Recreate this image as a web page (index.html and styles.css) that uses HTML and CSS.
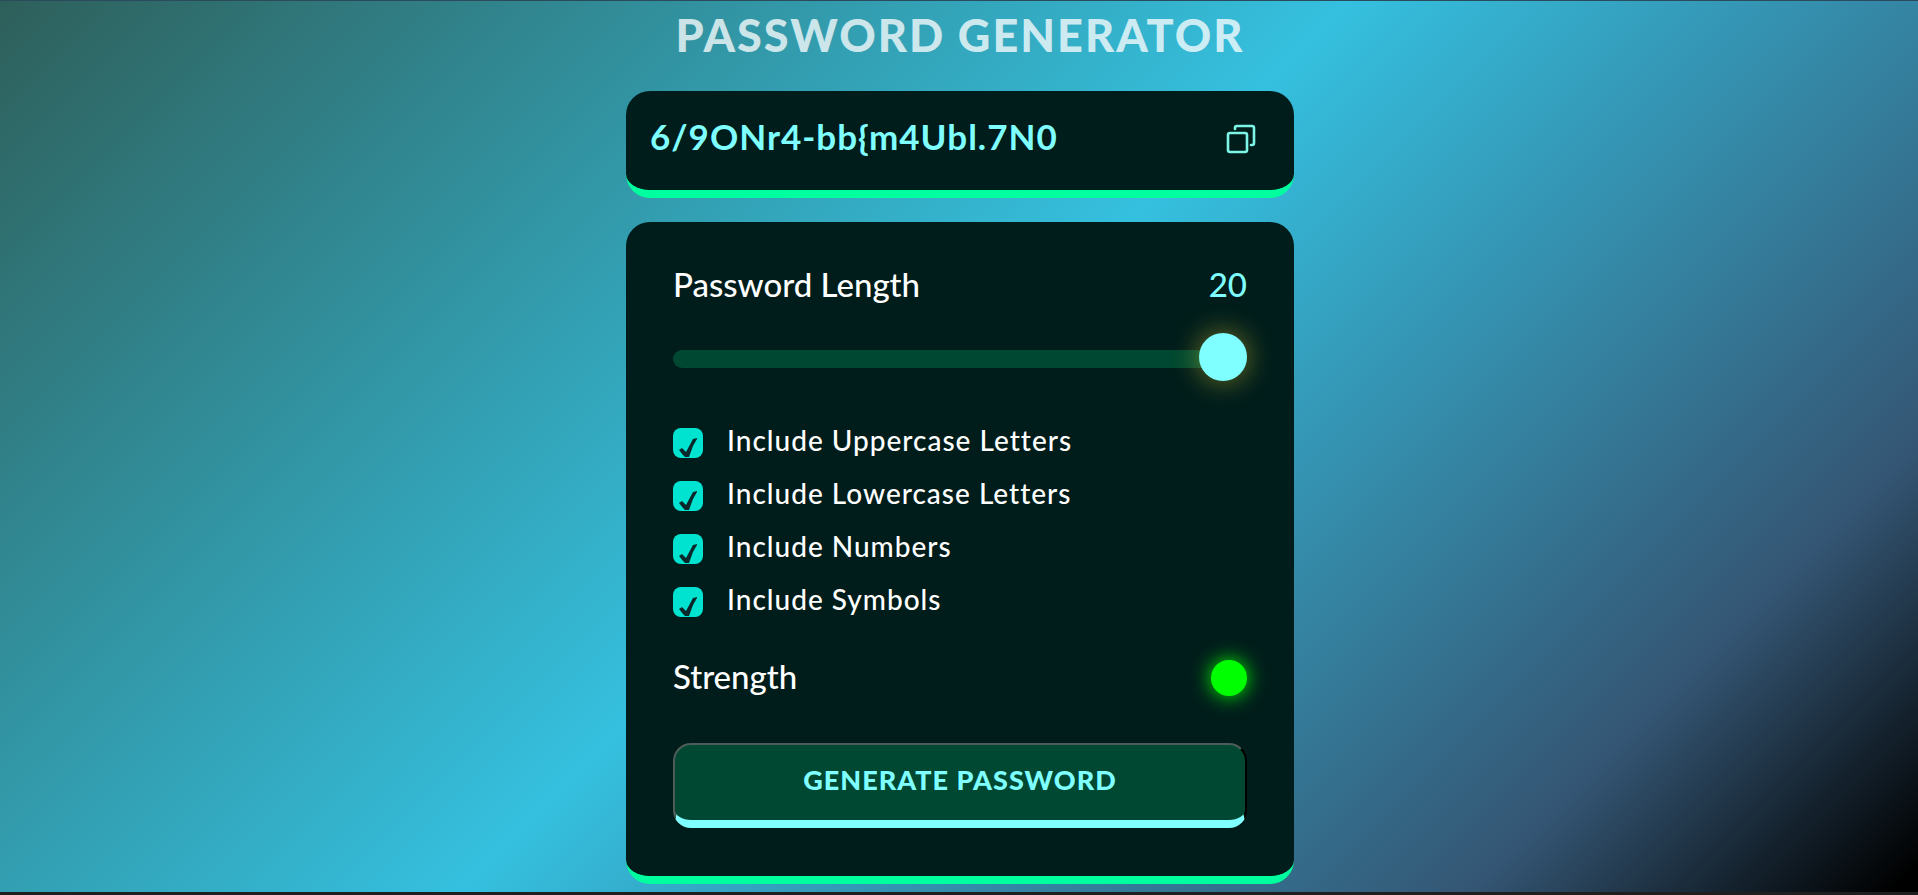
FILE: index.html
```html
<!DOCTYPE html>
<html lang="en">
<head>
<meta charset="utf-8">
<meta name="viewport" content="width=device-width, initial-scale=1">
<title>Password Generator</title>
<link rel="stylesheet" href="styles.css">
</head>
<body>
<main class="container">
  <h1 class="title">Password Generator</h1>

  <div class="display">
    <input class="display-value" type="text" readonly aria-label="Generated password" value="6/9ONr4-bb{m4Ubl.7N0">
    <button class="copy" type="button" aria-label="Copy password">
      <svg viewBox="0 0 30 30" fill="none" stroke="currentColor" stroke-width="2.6" stroke-linecap="round" stroke-linejoin="round" aria-hidden="true">
        <rect x="2" y="9" width="19" height="19" rx="2"/>
        <path d="M9 5V4a2 2 0 0 1 2-2h15a2 2 0 0 1 2 2v15a2 2 0 0 1-2 2h-1"/>
      </svg>
    </button>
  </div>

  <form class="panel">
    <div class="row">
      <label for="length">Password Length</label>
      <output class="length-value" for="length">20</output>
    </div>
    <input class="slider" id="length" type="range" min="1" max="20" value="20">

    <div class="options">
      <div class="option"><input class="check" id="uppercase" type="checkbox" checked><label class="option-label" for="uppercase">Include Uppercase Letters</label></div>
      <div class="option"><input class="check" id="lowercase" type="checkbox" checked><label class="option-label" for="lowercase">Include Lowercase Letters</label></div>
      <div class="option"><input class="check" id="numbers" type="checkbox" checked><label class="option-label" for="numbers">Include Numbers</label></div>
      <div class="option"><input class="check" id="symbols" type="checkbox" checked><label class="option-label" for="symbols">Include Symbols</label></div>
    </div>

    <div class="row strength">
      <span class="strength-label">Strength</span>
      <span class="indicator"></span>
    </div>

    <button class="generate" type="button">Generate Password</button>
  </form>
</main>
</body>
</html>
```

FILE: styles.css
```css
* {
  box-sizing: border-box;
  margin: 0;
  padding: 0;
}

body {
  min-height: 100vh;
  padding-left: 2px;
  font-family: Lato, "Open Sans", sans-serif;
  color: #fff;
  background: linear-gradient(135deg, #2e5f5a 0%, #35c0df 48%, #345674 84%, #000 99%);
  border-top: 1px solid #2b4a5c;
  border-bottom: 3px solid #1f1f1f;
}

.container {
  width: 90%;
  max-width: 668px;
  margin: 0 auto;
}

.title {
  padding-top: 6px;
  line-height: 56px;
  margin-bottom: 28px;
  font-size: 45px;
  font-weight: 900;
  letter-spacing: 2px;
  text-align: center;
  text-transform: uppercase;
  color: rgba(255, 255, 255, 0.75);
}

.display,
.panel {
  background: #001d1b;
  border-bottom: 8px solid #00ff9f;
  border-radius: 24px;
}

.display {
  display: flex;
  align-items: center;
  gap: 24px;
  padding: 16px 38px 20px 24px;
  margin-bottom: 24px;
}

.display-value {
  flex: 1;
  min-width: 0;
  height: 63px;
  padding-bottom: 6px;
  border: 0;
  outline: 0;
  background: transparent;
  font: bold 35px Lato, "Open Sans", sans-serif;
  letter-spacing: 1px;
  color: #7fffff;
}

.copy {
  width: 30px;
  height: 30px;
  border: 0;
  background: transparent;
  color: #7df5e6;
}

.copy svg {
  display: block;
  width: 30px;
  height: 30px;
}

.panel {
  padding: 40px 47px 48px;
}

.row {
  display: flex;
  align-items: center;
  justify-content: space-between;
  font-size: 33px;
  font-weight: 500;
  line-height: 44px;
}

.length-value {
  color: #7fffff;
}

.slider {
  display: block;
  appearance: none;
  width: 100%;
  height: 18px;
  margin: 44px 0 60px;
  border-radius: 9px;
  background: #004831;
}

.slider::-webkit-slider-thumb {
  appearance: none;
  width: 48px;
  height: 48px;
  margin-bottom: 4px;
  border-radius: 50%;
  background: #7fffff;
  box-shadow: 0 0 28px rgba(255, 230, 50, 0.45);
}

.options {
  display: grid;
  gap: 23px;
}

.option {
  display: flex;
  align-items: center;
  gap: 24px;
}

.option-label {
  padding-bottom: 6px;
  font-size: 28px;
  font-weight: 500;
  line-height: 24px;
  letter-spacing: 1px;
}

.check {
  appearance: none;
  width: 30px;
  height: 30px;
  border-radius: 8px;
  background: #00e3d0;
  overflow: hidden;
}

.check:checked::after {
  content: "";
  display: block;
  width: 30px;
  height: 30px;
  background: #08282c;
  clip-path: polygon(6px 22px, 9px 20px, 13px 24px, 20px 11px, 24px 10px, 24px 11px, 20px 18px, 16px 29px, 12px 29px, 10px 27px);
}

.strength {
  margin: 39px 0 43px;
}

.strength-label {
  padding-bottom: 4px;
  line-height: 40px;
}

.indicator {
  width: 36px;
  height: 36px;
  border-radius: 50%;
  background: #0f0;
  box-shadow: 0 0 20px #0f0;
}

.generate {
  display: block;
  width: 100%;
  height: 85px;
  padding-bottom: 6px;
  border: 2px solid;
  border-color: #4d5d59 #000 #7fffff #4d5d59;
  border-bottom-width: 8px;
  border-radius: 18px;
  background: #004831;
  font: 900 27px Lato, "Open Sans", sans-serif;
  letter-spacing: 1px;
  text-transform: uppercase;
  color: #7fffff;
}
```
